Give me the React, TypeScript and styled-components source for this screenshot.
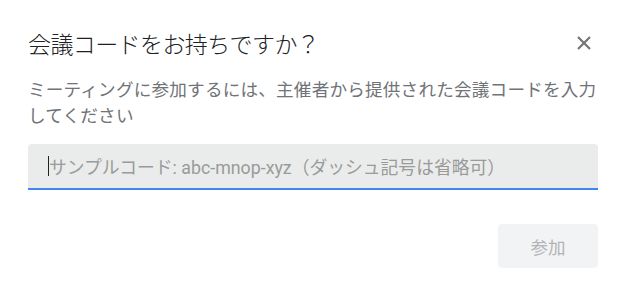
import React from "react";
import styled, { createGlobalStyle } from "styled-components";

const Global = createGlobalStyle`
  html, body { margin: 0; padding: 0; background: #ffffff; }
  * { box-sizing: border-box; }
`;

const Dialog = styled.div`
  width: 621px;
  height: 290px;
  padding: 24px 23px 0 28px;
  font-family: Roboto, "Noto Sans CJK JP", sans-serif;
  display: flex;
  flex-direction: column;
`;

const Header = styled.div`
  display: flex;
  align-items: center;
  justify-content: space-between;
  height: 38px;
`;

const Title = styled.h1`
  margin: 0;
  font-family: "Noto Sans CJK JP", sans-serif;
  font-weight: 300;
  font-size: 23px;
  color: #202124;
  letter-spacing: -0.6px;
`;

const CloseButton = styled.button`
  border: none;
  background: transparent;
  padding: 0;
  width: 24px;
  height: 24px;
  display: flex;
  align-items: center;
  justify-content: center;
  margin-right: 2px;
`;

const Description = styled.p`
  margin: 14px -6px 0 0;
  font-family: "Noto Sans CJK JP", sans-serif;
  font-size: 17.6px;
  line-height: 26px;
  color: #707377;
  font-weight: 400;
  letter-spacing: 0.2px;
`;

const Field = styled.div`
  margin-top: 16px;
  height: 46px;
  background: #eaeceb;
  border-radius: 4px 4px 0 0;
  border-bottom: 2px solid #4285f4;
  display: flex;
  align-items: center;
  padding-left: 20px;
`;

const Caret = styled.span`
  width: 1px;
  height: 20px;
  background: #202124;
`;

const Placeholder = styled.span`
  font-family: Roboto, "Noto Sans CJK JP", sans-serif;
  font-size: 17.8px;
  color: #9a9a9a;
`;

const Footer = styled.div`
  display: flex;
  justify-content: flex-end;
  margin-top: 34px;
`;

const JoinButton = styled.button`
  width: 100px;
  height: 44px;
  border: none;
  border-radius: 4px;
  background: #f1f3f4;
  color: #b1b3b5;
  font-family: "Noto Sans CJK JP", sans-serif;
  font-size: 17.5px;
`;

export default function App() {
  return (
    <>
      <Global />
      <Dialog>
        <Header>
          <Title>会議コードをお持ちですか？</Title>
          <CloseButton aria-label="閉じる">
            <svg width="16" height="16" viewBox="0 0 16 16">
              <path d="M2 2 L14 14 M14 2 L2 14" stroke="#757575" strokeWidth="2.2" />
            </svg>
          </CloseButton>
        </Header>
        <Description>
          ミーティングに参加するには、主催者から提供された会議コードを入力してください
        </Description>
        <Field>
          <Caret />
          <Placeholder>サンプルコード: abc-mnop-xyz（ダッシュ記号は省略可）</Placeholder>
        </Field>
        <Footer>
          <JoinButton disabled>参加</JoinButton>
        </Footer>
      </Dialog>
    </>
  );
}
